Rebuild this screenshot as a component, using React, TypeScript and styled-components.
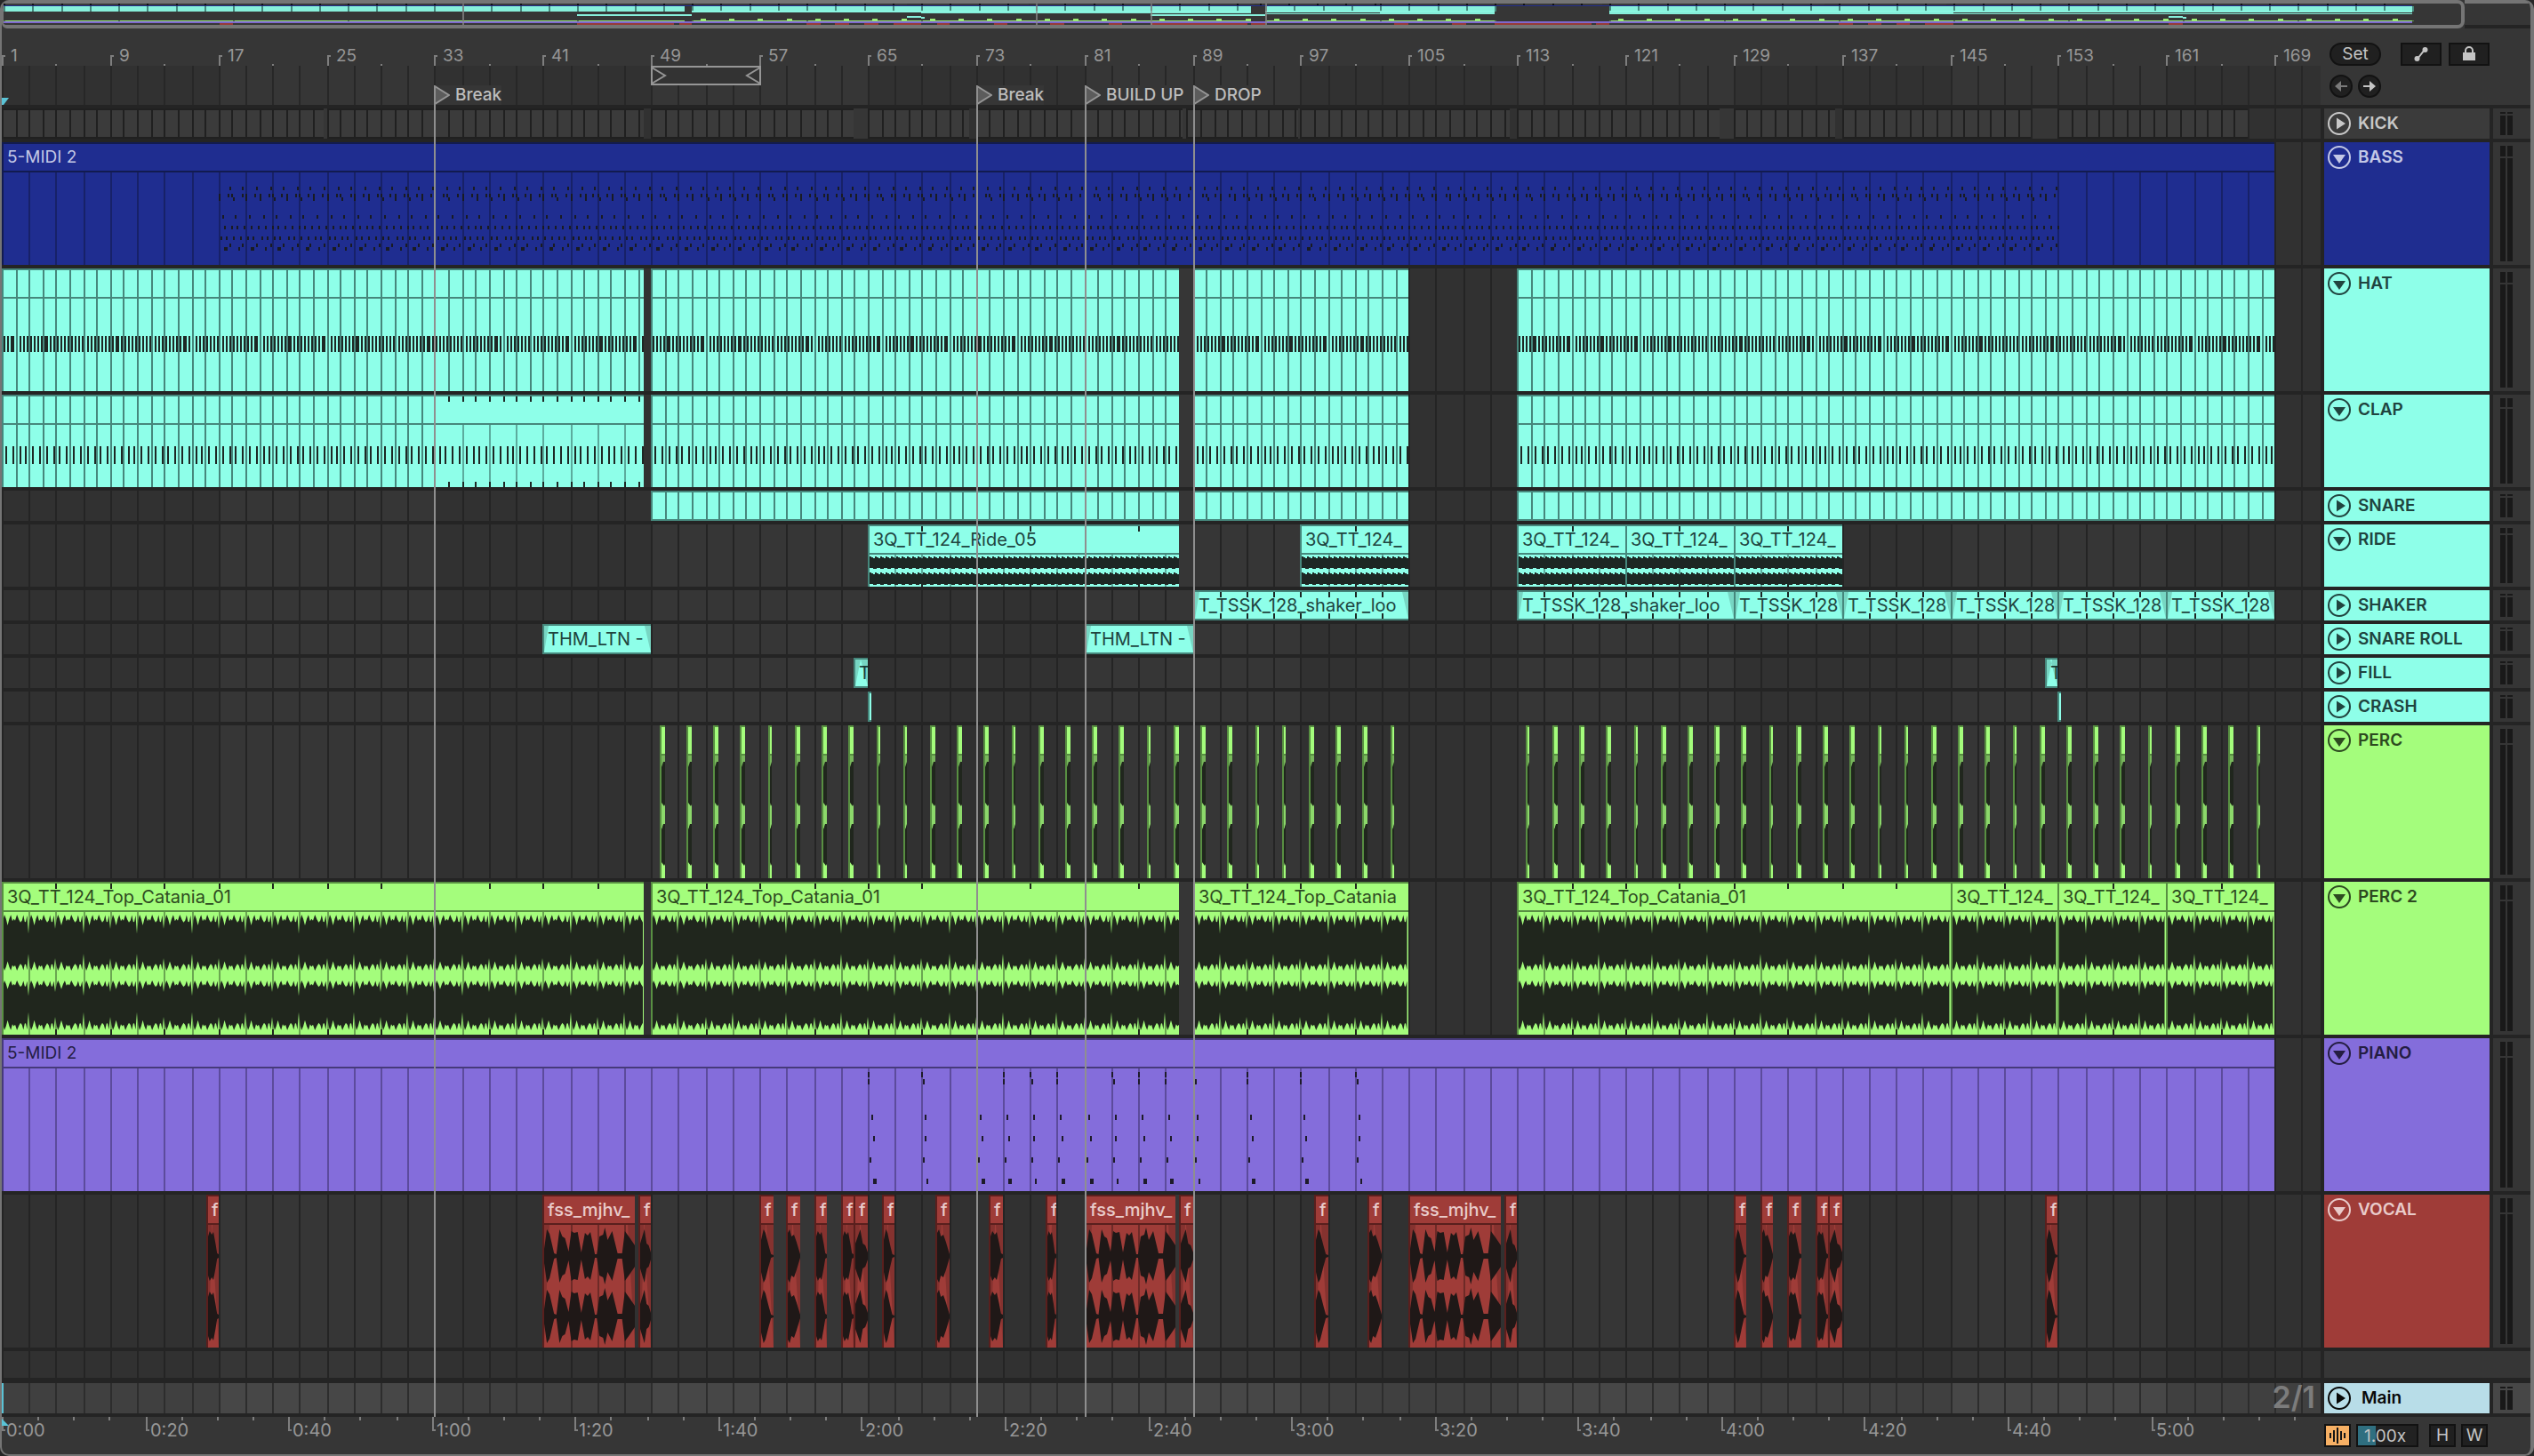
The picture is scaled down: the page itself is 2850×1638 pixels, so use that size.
import React, { createContext, useContext, useLayoutEffect, useRef, useState } from "react";
import styled, { createGlobalStyle } from "styled-components";

/* ---------- palette ---------- */

type Palette = { base: string; edge: string; grid: string; ink: string; wave: string };

const CYAN: Palette = { base: "#8effe9", edge: "#46877c", grid: "#5cab9d", ink: "#20443f", wave: "#1d2724" };
const GREEN: Palette = { base: "#a4fd7c", edge: "#588f42", grid: "#6aa651", ink: "#2d4a20", wave: "#20261d" };
const BLUE: Palette = { base: "#1f2d90", edge: "#121b50", grid: "#172168", ink: "#c3c8e6", wave: "#191b22" };
const PURPLE: Palette = { base: "#846ddb", edge: "#463a7a", grid: "#5c4b9c", ink: "#241d42", wave: "#1e1b2a" };
const RED: Palette = { base: "#9f3c38", edge: "#5a1f1d", grid: "#6e2a27", ink: "#e9cbca", wave: "#1f1817" };
const GREY: Palette = { base: "#3b3b3b", edge: "#202020", grid: "#2c2c2c", ink: "#c8c8c8", wave: "#111111" };

const PANEL = "#363636";
const GUTTER = "#242424";
const LANE_DARK = "#313131";
const LANE_LIGHT = "#363636";
const FRAME = "#757575";
const MUTED = "#969696";

/* ---------- arrangement data ---------- */

type Wave = "top" | "ride" | "perc" | "phrase" | "cone" | "double" | "blob" | "twin";
type ClipData = {
  start: number;
  end: number;
  label?: string;
  split?: number;
  grid?: number;
  ticks?: number;
  wave?: Wave;
  notes?: "bass" | "hat" | "clap" | "piano";
  fade?: [number, number];
};
type TrackData = { name: string; height: number; open: boolean; palette: Palette; clips: ClipData[] };

const spans = (list: [number, number][], extra: Omit<ClipData, "start" | "end">): ClipData[] =>
  list.map(([start, end]) => ({ start, end, ...extra }));

const range = (from: number, to: number, step: number) => {
  const out: number[] = [];
  for (let i = 0; from + i * step <= to + 0.0001; i++) out.push(from + i * step);
  return out;
};

const percHits = [...range(49.6, 87.6, 2), ...range(89.6, 103.6, 2), ...range(113.6, 167.6, 2)];

const vocalShots: [number, number, Wave][] = [
  [16.05, 17, "twin"], [48.1, 49, "blob"], [57, 58, "cone"], [59, 60, "double"], [61, 62, "twin"],
  [63.05, 64, "twin"], [64, 65, "blob"], [66.1, 67, "cone"], [70.05, 71, "double"], [74, 75, "twin"],
  [78.1, 79, "twin"], [88, 89, "blob"], [98, 99, "cone"], [102, 103, "double"], [112.05, 113, "blob"],
  [129, 129.95, "cone"], [131, 131.95, "double"], [133, 133.95, "twin"], [135, 136, "twin"],
  [136, 137, "blob"], [152, 153, "cone"],
];

const ride: Omit<ClipData, "start" | "end"> = { ticks: 4, grid: 2, wave: "ride" };
const shaker: Omit<ClipData, "start" | "end"> = { ticks: 2, fade: [5, 7] };
const top: Omit<ClipData, "start" | "end"> = { ticks: 4, grid: 2, wave: "top" };

const TRACKS: TrackData[] = [
  {
    name: "KICK", height: 34, open: false, palette: GREY,
    clips: spans(
      [[1, 24.8], [25, 48.5], [49, 64], [65, 72.5], [73, 88.25], [88.6, 96.75], [97, 112.5], [113, 128], [129, 136.5], [137, 151], [153, 167]],
      { split: 1 },
    ),
  },
  {
    name: "BASS", height: 138, open: true, palette: BLUE,
    clips: [{ start: 1, end: 169, label: "5-MIDI 2", grid: 2, notes: "bass" }],
  },
  {
    name: "HAT", height: 138, open: true, palette: CYAN,
    clips: spans([[1, 48.5], [49, 88], [89, 105], [113, 169]], { split: 1, notes: "hat" }),
  },
  {
    name: "CLAP", height: 104, open: true, palette: CYAN,
    clips: [
      { start: 1, end: 33, split: 1, notes: "clap" },
      { start: 33, end: 48.5, ticks: 1, grid: 2, notes: "clap" },
      ...spans([[49, 88], [89, 105], [113, 169]], { split: 1, notes: "clap" }),
    ],
  },
  { name: "SNARE", height: 34, open: false, palette: CYAN, clips: spans([[49, 88], [89, 105], [113, 169]], { split: 1 }) },
  {
    name: "RIDE", height: 70, open: true, palette: CYAN,
    clips: [
      { start: 65, end: 88, label: "3Q_TT_124_Ride_05", ...ride },
      ...spans([[97, 105], [113, 121], [121, 129], [129, 137]], { label: "3Q_TT_124_", ...ride }),
    ],
  },
  {
    name: "SHAKER", height: 34, open: false, palette: CYAN,
    clips: [
      ...spans([[89, 105], [113, 129]], { label: "T_TSSK_128_shaker_loo", ...shaker }),
      ...spans([[129, 137], [137, 145], [145, 153], [153, 161], [161, 169]], { label: "T_TSSK_128", ...shaker }),
    ],
  },
  {
    name: "SNARE ROLL", height: 34, open: false, palette: CYAN,
    clips: spans([[41, 49], [81, 89]], { label: "THM_LTN -", fade: [5, 7] }),
  },
  { name: "FILL", height: 34, open: false, palette: CYAN, clips: spans([[64, 65], [152, 153]], { label: "T", fade: [6, 8] }) },
  { name: "CRASH", height: 34, open: false, palette: CYAN, clips: spans([[65, 65.25], [153, 153.25]], {}) },
  {
    name: "PERC", height: 172, open: true, palette: GREEN,
    clips: percHits.map((n) => ({ start: n, end: n + 0.36, wave: "perc" as Wave })),
  },
  {
    name: "PERC 2", height: 172, open: true, palette: GREEN,
    clips: [
      ...spans([[1, 48.5], [49, 88], [113, 145]], { label: "3Q_TT_124_Top_Catania_01", ...top }),
      { start: 89, end: 105, label: "3Q_TT_124_Top_Catania", ...top },
      ...spans([[145, 153], [153, 161], [161, 169]], { label: "3Q_TT_124_", ...top }),
    ],
  },
  {
    name: "PIANO", height: 172, open: true, palette: PURPLE,
    clips: [{ start: 1, end: 169, label: "5-MIDI 2", grid: 2, notes: "piano" }],
  },
  {
    name: "VOCAL", height: 172, open: true, palette: RED,
    clips: [
      ...spans([[41, 47.75], [81, 87.75], [105, 111.75]], { label: "fss_mjhv_", grid: 2, wave: "phrase", fade: [6, 8] }),
      ...vocalShots.map(([start, end, wave]) => ({ start, end, wave, label: "f", fade: [5, 8] as [number, number] })),
    ],
  },
];

const LOCATORS = [
  { bar: 33, name: "Break" },
  { bar: 73, name: "Break" },
  { bar: 81, name: "BUILD UP" },
  { bar: 89, name: "DROP" },
];

/* ---------- time scale ---------- */

const VISIBLE_BARS = 171.39;
const BARS_PER_20S = 10.59;

const Scale = createContext(0);

const useScale = () => {
  const width = useContext(Scale);
  const bar = width / VISIBLE_BARS;
  const at = (n: number) => Math.round(((n - 1) * bar) / 2) * 2;
  return { width, bar, at };
};

function useWidth<T extends HTMLElement>() {
  const ref = useRef<T>(null);
  const [width, setWidth] = useState(0);
  useLayoutEffect(() => {
    const el = ref.current;
    if (!el) return;
    const read = () => setWidth(el.clientWidth);
    read();
    const observer = new ResizeObserver(read);
    observer.observe(el);
    return () => observer.disconnect();
  }, []);
  return [ref, width] as const;
}

const box = (x: number, y: number, w: number, h: number) => `M${x} ${y}h${w}v${h}h${-w}z`;

/* ---------- page ---------- */

const GlobalStyle = createGlobalStyle`
  * { box-sizing: border-box; }
  html, body { margin: 0; background: #262626; }
  body {
    font-family: Inter, "Liberation Sans", sans-serif;
    font-size: 19px;
    line-height: 20px;
    color: ${MUTED};
  }
  button, input { font: inherit; color: inherit; margin: 0; padding: 0; }
`;

const Window = styled.main`
  min-height: 100vh;
  display: flex;
  flex-direction: column;
  background: ${PANEL};
  border: 0 solid ${FRAME};
  border-width: 0 4px 2px 2px;
  border-radius: 10px;
  overflow: hidden;
`;

const OverviewBar = styled.section`
  display: flex;
  height: 32px;
`;

const OverviewFrame = styled.div`
  flex: 1;
  min-width: 0;
  border: 4px solid ${FRAME};
  border-left-width: 2px;
  border-radius: 6px 8px 8px 6px;
  background: ${PANEL};
`;

const OverviewRest = styled.div`
  width: 74px;
  border-top: 4px solid ${FRAME};
  border-bottom: 4px solid ${GUTTER};
`;

const Drawing = styled.svg`
  display: block;
  width: 100%;
  height: 100%;
`;

const Arrangement = styled.div`
  position: relative;
  display: flex;
  flex-direction: column;
`;

const TopArea = styled.div`
  display: grid;
  grid-template-columns: minmax(0, 1fr) 232px;
  column-gap: 4px;
`;

const Ruler = styled.div`
  position: relative;
  height: 42px;
`;

const ScrubArea = styled.div`
  position: relative;
  height: 44px;
`;

const RulerLabel = styled.span`
  position: absolute;
  top: 21px;
  padding-left: 10px;
`;

const TimeLabel = styled.span`
  position: absolute;
  top: 5px;
  padding-left: 5px;
  font-size: 20px;
`;

const SetControls = styled.div`
  display: flex;
  flex-direction: column;
  gap: 10px;
  padding: 16px 46px 0 6px;
`;

const ControlRow = styled.div`
  display: flex;
  gap: 6px;
`;

const ControlGroup = styled.div`
  display: flex;
  gap: 8px;
  margin-left: auto;
`;

const DarkButton = styled.button<{ $width: number; $round?: boolean; $dim?: boolean }>`
  width: ${(p) => p.$width}px;
  height: 26px;
  display: flex;
  align-items: center;
  justify-content: center;
  border: 2px solid #121212;
  border-radius: ${(p) => (p.$round ? "13px" : "0")};
  background: #202020;
  color: ${(p) => (p.$dim ? "#7a7a7a" : "#c4c4c4")};
`;

const TrackList = styled.div`
  display: flex;
  flex-direction: column;
  gap: 4px;
  padding: 4px 0;
  background: ${GUTTER};
`;

const TrackRow = styled.div<{ $height: number; $extraTop?: boolean }>`
  display: grid;
  grid-template-columns: minmax(0, 1fr) 186px 42px;
  column-gap: 4px;
  height: ${(p) => p.$height}px;
  margin-top: ${(p) => (p.$extraTop ? "2px" : "0")};
`;

const Lane = styled.div`
  position: relative;
  height: 100%;
  overflow: hidden;
`;

const TrackHeader = styled.div<{ $bg: string; $ink: string; $gap?: number }>`
  display: flex;
  align-items: flex-start;
  gap: ${(p) => p.$gap ?? 8}px;
  padding: 4px;
  background: ${(p) => p.$bg};
  color: ${(p) => p.$ink};
  font-weight: 600;
  line-height: 26px;
  white-space: nowrap;
`;

const FoldButton = styled.button`
  width: 26px;
  height: 26px;
  border: 0;
  background: none;
`;

const EmptyHeader = styled.div`
  grid-column: 2 / 4;
  background: ${PANEL};
`;

const MeterCell = styled.div<{ $bg: string }>`
  display: grid;
  grid-template-columns: 6px 6px;
  column-gap: 2px;
  padding: 4px 8px;
  background: ${(p) => p.$bg};
`;

const Meter = styled.div<{ $cap: number }>`
  display: grid;
  grid-template-rows: ${(p) => p.$cap}px 1fr;
  row-gap: 2px;
`;

const MeterPart = styled.div`
  background: #191919;
`;

const ClipBox = styled.div<{ $palette: Palette }>`
  position: absolute;
  top: 0;
  bottom: 0;
  overflow: hidden;
  border-left: 2px solid ${(p) => p.$palette.edge};
  background: ${(p) => p.$palette.base};
`;

const ClipTitle = styled.div<{ $palette: Palette; $audio: boolean; $strong: boolean }>`
  height: 34px;
  padding-left: 4px;
  border: 2px solid ${(p) => p.$palette.edge};
  border-width: 2px 0;
  color: ${(p) => p.$palette.ink};
  font-size: ${(p) => (p.$audio ? 20 : 19)}px;
  font-weight: ${(p) => (p.$strong ? 500 : 400)};
  line-height: 30px;
  white-space: nowrap;
`;

const ClipArt = styled.svg`
  position: absolute;
  top: 0;
  left: 0;
  width: 100%;
  height: 100%;
`;

const LocatorLine = styled.div`
  position: absolute;
  top: 65px;
  bottom: 0;
  width: 2px;
  background: #8f8f8f;
  pointer-events: none;
`;

const LocatorFlag = styled.button`
  position: absolute;
  top: 22px;
  height: 22px;
  display: flex;
  align-items: center;
  gap: 6px;
  border: 0;
  background: ${PANEL};
  color: #bdbdbd;
  font-weight: 500;
  white-space: nowrap;
`;

const GridValue = styled.span`
  position: absolute;
  top: 0;
  right: 6px;
  font-size: 34px;
  line-height: 32px;
  font-weight: 600;
  color: #7c7c7c;
`;

const Footer = styled.footer`
  display: grid;
  grid-template-columns: minmax(0, 1fr) 232px;
  column-gap: 4px;
  height: 42px;
`;

const TimeRuler = styled.div`
  position: relative;
  overflow: hidden;
`;

const FooterControls = styled.div`
  display: flex;
  gap: 6px;
  padding-top: 8px;
`;

const FollowButton = styled(DarkButton)`
  background: #f7b064;
  color: #161616;
`;

const ZoomField = styled.input`
  width: 70px;
  height: 26px;
  margin-right: 6px;
  padding-left: 7px;
  border: 2px solid #121212;
  background: linear-gradient(90deg, #2f6f80 20px, #222222 20px);
  color: #c4c4c4;
`;

/* ---------- lane backgrounds ---------- */

function GridDrawing({ dark, light, line }: { dark: string; light: string; line: string }) {
  const { width, at } = useScale();
  const bands = range(17, VISIBLE_BARS, 32).map((n) => box(at(n), 0, at(n + 16) - at(n), 200)).join("");
  const lines = range(1, VISIBLE_BARS + 1, 2).map((n) => box(at(n), 0, 2, 200)).join("");
  return (
    <Drawing aria-hidden="true">
      <rect width={width} height="200" fill={dark} />
      <path d={bands} fill={light} />
      <path d={lines} fill={line} />
    </Drawing>
  );
}

/* ---------- clip drawings ---------- */

type At = (n: number) => number;

function bassNotes(at: At) {
  let d = "";
  for (let n = 17, i = 0; n < 153; n += 2, i++) {
    const kind = i % 4;
    const x = at(n);
    d += box(x, 58, 2, kind < 2 ? 8 : 4);
    d += box(at(n + 0.66), 58, 2, 4);
    d += kind === 0 ? box(at(n + 0.92), 58, 2, 4) + box(at(n + 1.05), 62, 2, 4) : box(at(n + 1.05), 58, 2, 8);
    d += box(at(n + 1.7), 58, 2, 4);
    if (kind > 1) d += box(x + 2, 62, 2, 4);
  }
  for (let n = 17; n < 153; n++) {
    d += box(at(n + 0.8), 50, 2, 4);
    d += box(at(n + 0.26), 82, 2, 4);
    d += box(at(n + 0.4), 94, 2, 4) + box(at(n + 0.92), 94, 2, 4);
    d += box(at(n + 0.14), 106, 2, 4) + box(at(n + 0.55), 106, 2, 4);
    d += box(at(n + 0.8), 114, 2, 4);
    d += box(at(n + 0.42), 118, n % 2 ? 4 : 2, 4);
  }
  return d;
}

function pianoNotes(at: At) {
  return [65, 69, 73, 75, 77, 79, 81, 83, 85, 87, 89, 93, 97, 101]
    .map((n, i) => {
      const x = at(n);
      const late = i % 3 === 1 ? 2 : 0;
      return (
        box(x, 38, 2, 6) + box(x + late, 46, 2, 6) + box(x + 4, 86, 2, 6) +
        box(x + 6 - late, 110, 2, 6) + box(x + 2, 134, 2, 6) + box(x + 6, 158, late ? 2 : 4, 6)
      );
    })
    .join("");
}

const topPeaks: [number, number][] = [
  [0, 0], [0.05, 0.62], [0.1, 1], [0.16, 0.7], [0.22, 0.25], [0.28, 0.7], [0.34, 0.98], [0.4, 0.55], [0.45, 0.7],
  [0.5, 0.58], [0.57, 1], [0.64, 0.66], [0.7, 0.45], [0.76, 0.6], [0.81, 0.96], [0.86, 0.5], [0.9, 0.48], [0.95, 0.95],
];

function topWave(at: At, start: number, end: number) {
  const edge = (inner: number, outer: number) => {
    const pts: string[] = [];
    for (let n = start, i = 0; n < end; n += 2, i++) {
      for (const [f, v] of topPeaks) {
        if (n + f * 2 > end) break;
        const dip = f === 0 && i % 2 ? -0.35 : 0;
        pts.push(`${(at(n) + f * (at(n + 2) - at(n))).toFixed(1)} ${(inner + (outer - inner) * (v + dip)).toFixed(1)}`);
      }
    }
    return pts;
  };
  const band = (a: string[], b: string[]) => `M${a.join("L")}L${b.reverse().join("L")}z`;
  return band(edge(53, 37), edge(86, 100)) + band(edge(124, 111), edge(152, 167));
}

function rideWave(from: number, to: number) {
  let d = "";
  for (let x = from, i = 0; x < to; x += 2, i++) {
    const a = (i * 7) % 3;
    const b = (i * 5) % 4 > 1 ? 1 : 0;
    d += box(x, 36 + a, 2, 13 - a + b) + box(x, 54 + a, 2, 13 - a + b);
  }
  return d;
}

const envelopes: Record<string, [number, number][]> = {
  phrase: [
    [0, 8], [0.03, 30], [0.06, 25], [0.11, 3], [0.135, 2], [0.17, 30], [0.2, 22], [0.23, 20], [0.27, 5], [0.3, 28],
    [0.33, 26], [0.37, 27], [0.41, 4], [0.45, 26], [0.48, 23], [0.51, 27], [0.56, 2], [0.58, 2], [0.61, 22], [0.65, 24],
    [0.67, 32], [0.7, 18], [0.75, 28], [0.81, 3], [0.86, 3], [0.89, 28], [0.94, 21], [1, 12],
  ],
  cone: [[0, 18], [0.2, 30], [0.35, 26], [0.6, 12], [0.8, 2], [1, 1]],
  double: [[0, 26], [0.15, 30], [0.3, 22], [0.5, 24], [0.7, 16], [1, 2]],
  twin: [[0, 22], [0.15, 28], [0.35, 24], [0.5, 27], [0.7, 14], [0.85, 3], [1, 2]],
  blob: [[0, 14], [0.2, 22], [0.4, 30], [0.6, 14], [0.8, 12], [1, 4]],
};

function voiceWave(kind: string, w: number) {
  const pts = envelopes[kind];
  const channel = (cy: number) =>
    "M" + pts.map(([f, v]) => `${(f * w).toFixed(1)} ${cy - v}`).join("L") +
    "L" + [...pts].reverse().map(([f, v]) => `${(f * w).toFixed(1)} ${cy + v}`).join("L") + "z";
  return channel(69) + channel(137);
}

function percWave(w: number) {
  const oval = (t: number, b: number) => `M0 ${t + 6}L2 ${t}H${w}V${b - 2}L${Math.max(w - 1, 1)} ${b}L0 ${b - 4}z`;
  return oval(41, 91) + oval(111, 158);
}

function Clip({ clip, track }: { clip: ClipData; track: TrackData }) {
  const { at: absolute } = useScale();
  const left = absolute(clip.start);
  const width = absolute(clip.end) - left;
  if (width <= 2) return null;
  const at: At = (n) => absolute(n) - left - 2;
  const w = width - 2;
  const h = track.height;
  const { palette } = track;
  const floor = h > 34 ? h : h - 2;
  const midi = clip.notes !== undefined;

  const grid = clip.grid ? range(clip.start + clip.grid, clip.end - 0.01, clip.grid).map((n) => box(at(n), 34, 2, h)).join("") : "";
  const split = clip.split ? range(clip.start + clip.split, clip.end - 0.01, clip.split).map((n) => box(at(n), 0, 2, h)).join("") : "";
  const ticks = clip.ticks
    ? range(clip.start + clip.ticks, clip.end - 0.01, clip.ticks).map((n) => box(at(n), 2, 2, 6) + box(at(n), floor - 6, 2, 6)).join("")
    : "";

  let notes = "";
  if (clip.notes === "bass") notes = bassNotes(at);
  if (clip.notes === "piano") notes = pianoNotes(at);
  if (clip.notes === "hat") notes = range(clip.start, clip.end - 0.2, 0.25).map((n) => box(at(n + 0.1), 76, 2, 18)).join("");
  if (clip.notes === "clap") notes = range(clip.start, clip.end - 0.4, 0.5).map((n) => box(at(n + 0.27), 58, 2, 20)).join("");

  let wave = "";
  if (clip.wave === "top") wave = topWave(at, clip.start, clip.end);
  else if (clip.wave === "ride") wave = rideWave(0, w);
  else if (clip.wave === "perc") wave = percWave(w);
  else if (clip.wave) wave = voiceWave(clip.wave, w);

  const fadeTop = h > 34 ? 34 : 2;
  const fade = clip.fade
    ? `M0 ${fadeTop}H${clip.fade[0]}L0 ${floor}z M${w} ${fadeTop}H${w - clip.fade[1]}L${w} ${floor}z`
    : "";

  return (
    <ClipBox $palette={palette} style={{ left, width }}>
      <ClipArt aria-hidden="true">
        {clip.wave === "perc" && (
          <>
            <rect y="34" width={w} height="36" fill="#78b75c" />
            <rect y="88" width={w} height="26" fill="#8cd86b" />
          </>
        )}
        <path d={grid} fill={palette.grid} />
        <path d={fade} fill="#000000" fillOpacity="0.16" />
        <path d={wave} fill={palette.wave} />
        <path d={notes} fill={palette.wave} />
        <path d={split} fill={palette.edge} />
        <path d={ticks} fill={palette.wave} />
      </ClipArt>
      <ClipTitle $palette={palette} $audio={!midi} $strong={palette === RED}>
        {clip.label}
      </ClipTitle>
    </ClipBox>
  );
}

/* ---------- icons ---------- */

function FoldIcon({ open }: { open: boolean }) {
  return (
    <svg width="26" height="26" viewBox="0 0 26 26" aria-hidden="true">
      <circle cx="13" cy="13" r="12" fill="none" stroke="currentColor" strokeWidth="2" />
      <path d={open ? "M6 10H20L13 20z" : "M10 6.500V19.500L20 13z"} fill="currentColor" />
    </svg>
  );
}

function ArrowIcon({ back }: { back?: boolean }) {
  return (
    <svg width="16" height="16" viewBox="0 0 16 16" aria-hidden="true">
      <path
        d={back ? "M1 8L8 2V7H15V9H8V14z" : "M15 8L8 2V7H1V9H8V14z"}
        fill="currentColor"
      />
    </svg>
  );
}

function AutomationIcon() {
  return (
    <svg width="18" height="18" viewBox="0 0 18 18" aria-hidden="true">
      <path d="M4 14.500C8 12 10 6 14 3.500" fill="none" stroke="currentColor" strokeWidth="2" />
      <circle cx="4.500" cy="14" r="3" fill="currentColor" />
      <circle cx="13.500" cy="4" r="3" fill="currentColor" />
    </svg>
  );
}

function LockIcon() {
  return (
    <svg width="16" height="18" viewBox="0 0 16 18" aria-hidden="true">
      <path d="M1 7H15V16H1z" fill="currentColor" />
      <path d="M4 8V5a4 4 0 0 1 8 0V8" fill="none" stroke="currentColor" strokeWidth="2" />
    </svg>
  );
}

function WaveIcon() {
  return (
    <svg width="20" height="20" viewBox="0 0 20 20" aria-hidden="true">
      <path d="M1 7h2v6H1zM5 4h2v13H5zM9 1h2v18H9zM13 5h2v10h-2zM17 7h2v6h-2z" fill="currentColor" />
    </svg>
  );
}

/* ---------- sections ---------- */

const OVERVIEW_ROWS: [number, number][] = [
  [0, 2], [2, 1], [3, 2], [5, 4], [8, 2], [10, 1], [11, 1], [12, 2], [14, 2], [15, 2], [17, 2], [19, 1], [20, 2], [22, 2],
];

function Overview() {
  const [ref, width] = useWidth<HTMLDivElement>();
  const bar = width / VISIBLE_BARS;
  const at = (n: number) => Math.round((n - 1) * bar);
  return (
    <OverviewBar aria-label="Overview">
      <OverviewFrame ref={ref}>
        <Drawing aria-hidden="true">
          {TRACKS.map((track, i) => {
            const [y, h] = OVERVIEW_ROWS[i];
            const thin = track.name === "PERC";
            const body = track.clips
              .map((c) => box(at(c.start), y, Math.max(at(c.end) - at(c.start), thin ? 6 : 2), h))
              .join("");
            const cuts = i === 0 || i === 2 || i === 3 || i === 11
              ? track.clips.flatMap((c) => range(c.start, c.end, i === 11 ? 8 : 2).map((n) => box(at(n), y, 2, h))).join("")
              : "";
            return (
              <g key={track.name}>
                <path d={body} fill={track.palette.base} fillOpacity={0.92} />
                <path d={cuts} fill={i ? track.palette.edge : "#111111"} />
              </g>
            );
          })}
          <path d={LOCATORS.map((l) => box(at(l.bar), 0, 2, 24)).join("")} fill="#8f8f8f" fillOpacity="0.7" />
        </Drawing>
      </OverviewFrame>
      <OverviewRest />
    </OverviewBar>
  );
}

function BarRuler() {
  const { at } = useScale();
  const majors = range(1, 169, 8);
  return (
    <Ruler>
      <Drawing aria-hidden="true">
        <path
          d={majors.map((n) => box(at(n), 30, 2, 12) + box(at(n), 30, 4, 2) + (n < 169 ? box(at(n + 4), 40, 2, 2) : "")).join("")}
          fill="#7e7e7e"
        />
      </Drawing>
      {majors.map((n) => (
        <RulerLabel key={n} style={{ left: at(n) }}>{n}</RulerLabel>
      ))}
    </Ruler>
  );
}

function Scrub() {
  const { at } = useScale();
  const loopStart = at(49);
  const loopEnd = at(57) + 2;
  return (
    <ScrubArea>
      <Lane>
        <GridDrawing dark={LANE_DARK} light={LANE_LIGHT} line="#272727" />
      </Lane>
      <ClipArt aria-hidden="true">
        <rect x={loopStart + 1} y="1" width={loopEnd - loopStart - 2} height="20" fill="#333333" stroke={MUTED} strokeWidth="2" />
        <path
          d={`M${loopStart + 1} 2L${loopStart + 16} 11L${loopStart + 1} 20M${loopEnd - 1} 2L${loopEnd - 16} 11L${loopEnd - 1} 20`}
          fill="none"
          stroke={MUTED}
          strokeWidth="2"
        />
        <path d="M0 36H8L2 44H0z" fill="#5ac3d6" />
      </ClipArt>
      {LOCATORS.map((l) => (
        <LocatorFlag key={l.bar} style={{ left: at(l.bar) }}>
          <svg width="18" height="22" viewBox="0 0 18 22" aria-hidden="true">
            <path d="M1 1L17 11L1 21z" fill="#5c5c5c" stroke={MUTED} strokeWidth="2" />
          </svg>
          {l.name}
        </LocatorFlag>
      ))}
    </ScrubArea>
  );
}

function Meters({ height, bg }: { height: number; bg: string }) {
  const cap = Math.floor(height / 20) * 2;
  return (
    <MeterCell $bg={bg}>
      {[0, 1].map((i) => (
        <Meter key={i} $cap={cap}>
          <MeterPart />
          <MeterPart />
        </Meter>
      ))}
    </MeterCell>
  );
}

function Track({ track }: { track: TrackData }) {
  return (
    <TrackRow $height={track.height}>
      <Lane>
        <GridDrawing dark={LANE_DARK} light={LANE_LIGHT} line={GUTTER} />
        {track.clips.map((clip) => (
          <Clip key={clip.start} clip={clip} track={track} />
        ))}
      </Lane>
      <TrackHeader $bg={track.palette.base} $ink={track.palette.ink}>
        <FoldButton aria-label={`Fold ${track.name}`}>
          <FoldIcon open={track.open} />
        </FoldButton>
        {track.name}
      </TrackHeader>
      <Meters height={track.height} bg="#353535" />
    </TrackRow>
  );
}

function Times() {
  const { bar } = useScale();
  const at = (k: number) => Math.round((k * bar * BARS_PER_20S) / 2) * 2;
  const majors = range(0, 15, 1);
  return (
    <TimeRuler>
      <ClipArt aria-hidden="true">
        <path
          d={
            majors.map((k) => box(at(k), 0, 2, 16) + box(at(k), 14, 4, 2)).join("") +
            range(0, 16, 0.25).map((k) => box(at(k), 0, 2, 4)).join("")
          }
          fill="#7e7e7e"
        />
        <path d="M0 2L8 10H0z" fill="#5ac3d6" />
      </ClipArt>
      {majors.map((k) => (
        <TimeLabel key={k} style={{ left: at(k) }}>
          {`${Math.floor(k / 3)}:${(k % 3) * 2}0`}
        </TimeLabel>
      ))}
    </TimeRuler>
  );
}

function LocatorPosition({ bar }: { bar: number }) {
  const { at } = useScale();
  return <LocatorLine style={{ left: at(bar) }} />;
}

export default function App() {
  const [laneRef, laneWidth] = useWidth<HTMLDivElement>();
  return (
    <Scale.Provider value={laneWidth}>
      <GlobalStyle />
      <Window>
        <Overview />
        <Arrangement>
          <TopArea>
            <div ref={laneRef}>
              <BarRuler />
              <Scrub />
            </div>
            <SetControls>
              <ControlRow>
                <DarkButton $width={58} $round>Set</DarkButton>
                <ControlGroup>
                  <DarkButton $width={46} aria-label="Automation mode"><AutomationIcon /></DarkButton>
                  <DarkButton $width={46} aria-label="Lock envelopes"><LockIcon /></DarkButton>
                </ControlGroup>
              </ControlRow>
              <ControlRow>
                <DarkButton $width={26} $round $dim aria-label="Previous locator"><ArrowIcon back /></DarkButton>
                <DarkButton $width={26} $round aria-label="Next locator"><ArrowIcon /></DarkButton>
              </ControlRow>
            </SetControls>
          </TopArea>
          <TrackList>
            {TRACKS.map((track) => (
              <Track key={track.name} track={track} />
            ))}
            <TrackRow $height={30}>
              <Lane>
                <GridDrawing dark={LANE_DARK} light={LANE_LIGHT} line={GUTTER} />
              </Lane>
              <EmptyHeader />
            </TrackRow>
            <TrackRow $height={34} $extraTop>
              <Lane>
                <GridDrawing dark="#404040" light="#474747" line="#2d2d2d" />
                <ClipArt aria-hidden="true">
                  <rect width="2" height="34" fill="#5ac3d6" />
                </ClipArt>
                <GridValue>2/1</GridValue>
              </Lane>
              <TrackHeader $bg="#b8dde8" $ink="#080808" $gap={12}>
                <FoldButton aria-label="Fold Main">
                  <FoldIcon open={false} />
                </FoldButton>
                Main
              </TrackHeader>
              <Meters height={34} bg="#474747" />
            </TrackRow>
          </TrackList>
          {LOCATORS.map((l) => (
            <LocatorPosition key={l.bar} bar={l.bar} />
          ))}
        </Arrangement>
        <Footer>
          <Times />
          <FooterControls>
            <FollowButton $width={30} aria-label="Follow"><WaveIcon /></FollowButton>
            <ZoomField aria-label="Zoom" defaultValue="1.00x" />
            <DarkButton $width={30}>H</DarkButton>
            <DarkButton $width={30}>W</DarkButton>
          </FooterControls>
        </Footer>
      </Window>
    </Scale.Provider>
  );
}
